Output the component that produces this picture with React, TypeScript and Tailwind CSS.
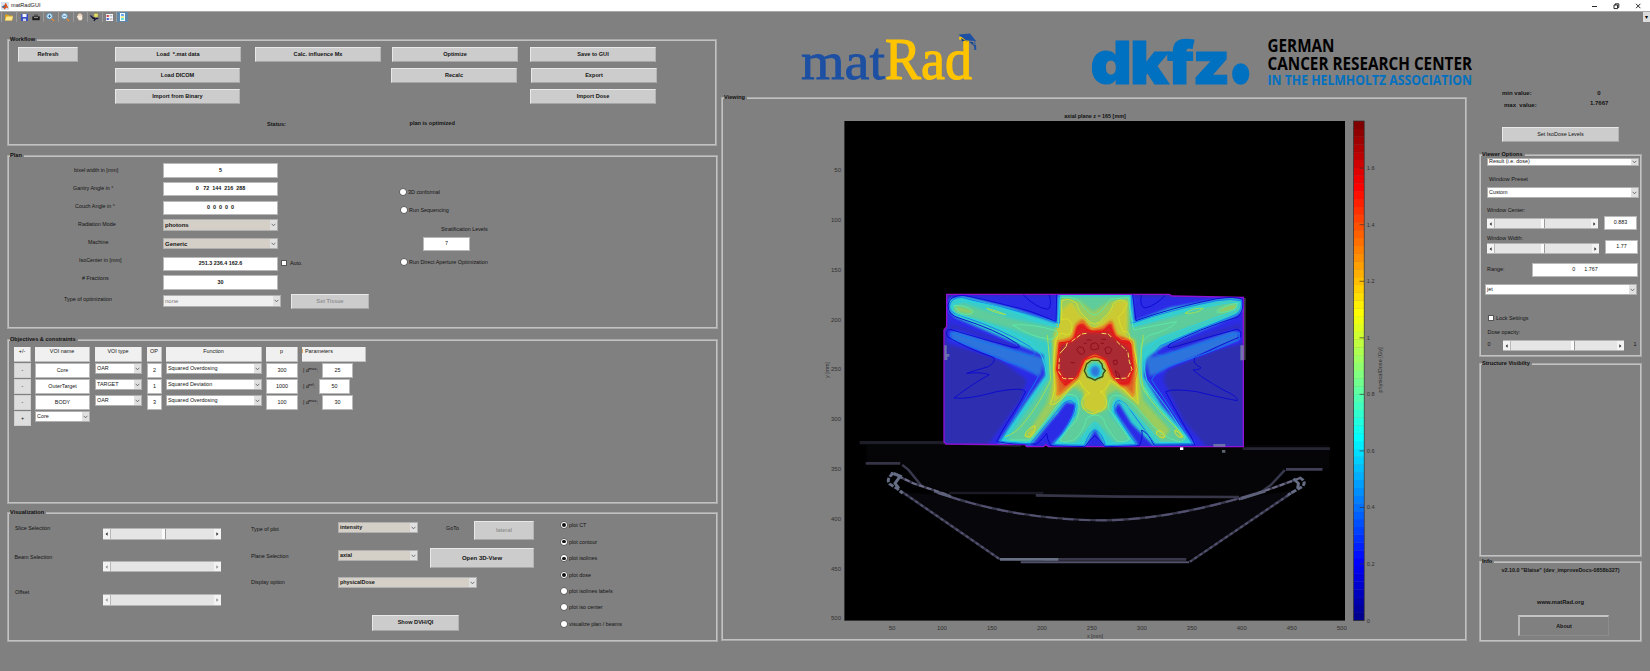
import React from "react";

type Kids = { className?: string; children?: React.ReactNode };

const Panel = ({ title, className = "", children }: Kids & { title: string }) => (
  <section className={`border-[1px] border-[#a9a9a9] shadow-[inset_0_0_0_1px_#c2c2c2] p-px ${className}`}>
    <h2 className="-mt-[6px] mb-[-2px] ml-px h-[8px] w-fit bg-[#808080] pr-[2px] text-[5.6px] font-bold leading-[8px] text-[#101010] whitespace-nowrap">
      {title}
    </h2>
    {children}
  </section>
);

const Label = ({ className = "", children }: Kids) => (
  <div className={`h-[8px] shrink-0 whitespace-pre leading-[8px] ${className}`}>{children}</div>
);

const Btn = ({ className = "", children }: Kids) => (
  <button
    className={`flex shrink-0 items-center justify-center whitespace-pre border border-b-[#a6a6a6] border-l-[#e8e8e8] border-r-[#b4b4b4] border-t-[#e8e8e8] bg-[#cccccc] leading-none ${className}`}
  >
    {children}
  </button>
);

const Edit = ({ className = "", children }: Kids) => (
  <div className={`flex shrink-0 items-center justify-center whitespace-pre border border-[#b9b9b9] bg-white leading-none ${className}`}>
    {children}
  </div>
);

const Popup = ({ className = "", children }: Kids) => (
  <div className={`flex shrink-0 items-center justify-between overflow-hidden border border-[#b0b0b0] pl-[1px] leading-none ${className}`}>
    <span className="whitespace-nowrap">{children}</span>
    <span className="flex h-full w-[7px] shrink-0 items-center justify-center bg-[#e0e0e0]">
      <svg width="5" height="4" viewBox="0 0 5 4">
        <path d="M0.6 0.8 L2.5 2.8 L4.4 0.8" fill="none" stroke="#555" strokeWidth="0.8" />
      </svg>
    </span>
  </div>
);

const Slider = ({ className = "", thumb, off }: { className?: string; thumb?: string; off?: boolean }) => (
  <div className={`flex shrink-0 border-y border-[#b4b4b4] bg-[#e5e5e5] ${className}`}>
    <span className="flex w-[8px] shrink-0 items-center justify-center border-r border-[#b9b9b9] bg-[#f3f3f3]">
      <svg width="3" height="4" viewBox="0 0 3 4">
        <path d="M2.6 0.3 L0.6 2 L2.6 3.7 Z" fill={off ? "#8a8a8a" : "#222"} />
      </svg>
    </span>
    <span className="flex grow">
      {thumb && <span className={`w-[4px] border-r border-[#9a9a9a] bg-[#fafafa] ${thumb}`} />}
    </span>
    <span className="flex w-[7px] shrink-0 items-center justify-center bg-[#f3f3f3]">
      <svg width="3" height="4" viewBox="0 0 3 4">
        <path d="M0.4 0.3 L2.4 2 L0.4 3.7 Z" fill={off ? "#8a8a8a" : "#222"} />
      </svg>
    </span>
  </div>
);

const Radio = ({ on, className = "", children }: Kids & { on?: boolean }) => (
  <div className={`flex h-[8px] shrink-0 items-center whitespace-nowrap leading-[8px] ${className}`}>
    <span className="mr-[2px] flex h-[6px] w-[6px] items-center justify-center rounded-full bg-white shadow-[0_0_0_0.5px_#444]">
      {on && <span className="h-[3.4px] w-[3.4px] rounded-full bg-[#111]" />}
    </span>
    {children}
  </div>
);

const Head = ({ className = "", children }: Kids) => (
  <div className={`h-[15px] shrink-0 border-b border-r border-[#c0c0c0] bg-[#f0f0f0] text-center leading-[8px] ${className}`}>{children}</div>
);

const Sign = ({ children }: Kids) => (
  <div className="mt-[1px] flex h-[15px] items-center justify-center border border-[#cfcfcf] bg-[#dedede] leading-none">{children}</div>
);

const Sep = ({ className = "" }: Kids) => <span className={`h-[10px] w-px bg-[#9a9a9a] ${className}`} />;

function Toolbar() {
  return (
    <div className="flex h-[11px] items-center border-t border-[#a8a8a8]">
      <Sep className="ml-px" />
      <svg className="ml-[3px]" width="8" height="8" viewBox="0 0 8 8">
        <path d="M0 1.5h3l1 1h3.5v5H0z" fill="#d9a321" />
        <path d="M1.5 3.6H8L6.8 7.5H0z" fill="#ffe88c" />
      </svg>
      <Sep className="ml-[3px]" />
      <svg className="ml-[4px]" width="7" height="7" viewBox="0 0 7 7">
        <path d="M0 0h7v7H0z" fill="#3b4fc4" />
        <path d="M1.5 0h4v3h-4z" fill="#f2f4ff" />
        <path d="M2 4.6h3V7H2z" fill="#c9d0ee" />
      </svg>
      <svg className="ml-[4px]" width="8" height="7" viewBox="0 0 8 7">
        <path d="M2 0.5h4v2H2z" fill="#555" />
        <path d="M0.3 2.4h7.4v3.8H0.3z" fill="#1c1c1c" />
        <path d="M2 3.2h4v0.9H2z" fill="#aaa" />
      </svg>
      <Sep className="ml-[3px]" />
      {[0, 1].map((i) => (
        <React.Fragment key={i}>
          <svg className="ml-[2px]" width="9" height="9" viewBox="0 0 9 9">
            <path d="M5 5 L8 8" stroke="#d98a3a" strokeWidth="1.5" />
            <circle cx="3.5" cy="3.2" r="2.7" fill="#e9f7ff" stroke="#5fa6d6" strokeWidth="0.9" />
            <path d={i ? "M2 3.2h3" : "M2 3.2h3M3.5 1.7v3"} stroke="#28609a" strokeWidth="0.9" />
          </svg>
          <Sep className="ml-[3px]" />
        </React.Fragment>
      ))}
      <svg className="ml-[2px]" width="8" height="8" viewBox="0 0 8 8">
        <path d="M0.6 3.4 L1.6 2.8 V1.2 h0.9 V0.4 h1 V0.2 h1 V0.6 h1 V1.4 h0.9 V3.6 L6.6 5.6 5.6 7.6H2.8z" fill="#fbeedd" stroke="#8b7b6a" strokeWidth="0.4" />
        <path d="M2.7 1.4 V3.2 M3.8 1 V3 M4.9 1.4 V3.2" stroke="#c59a72" strokeWidth="0.35" />
      </svg>
      <Sep className="ml-[3px]" />
      <svg className="ml-[2px]" width="9" height="9" viewBox="0 0 9 9">
        <path d="M4 0.5h4v3.6H4z" fill="#e8df6c" stroke="#8c8430" strokeWidth="0.4" />
        <path d="M0.4 2.5 L3.5 5.5 M4 8 Q5 5 8.4 5.5" stroke="#15154a" strokeWidth="1.2" fill="none" />
        <path d="M1.5 4.5h3.6v2.6z" fill="#111" />
      </svg>
      <Sep className="ml-[3px]" />
      <svg className="ml-[3px]" width="7" height="7" viewBox="0 0 7 7">
        <path d="M0 0h7v7H0z" fill="#f4f4fb" />
        <path d="M0.6 1h2.2v2H0.6z" fill="#d04848" />
        <path d="M0.6 4h2.2v2H0.6z" fill="#4b62cf" />
        <path d="M3.6 1.8h2.8M3.6 5h2.8" stroke="#777" strokeWidth="0.7" />
      </svg>
      <Sep className="ml-[3px]" />
      <span className="flex h-[10px] w-[11px] items-center justify-center bg-[#5f88a8]">
        <svg width="5" height="8" viewBox="0 0 5 8">
          <path d="M0 0h5v8H0z" fill="#f4f8ff" />
          <path d="M1 1h3v2H1z" fill="#6aa8f0" />
          <path d="M1 3h3v2H1z" fill="#e8f090" />
          <path d="M1 5h3v2H1z" fill="#6be0e0" />
        </svg>
      </span>
      <span className="ml-auto h-full w-[7px] bg-[#dcdcdc] text-center text-[6px] leading-[11px] text-black">▾</span>
    </div>
  );
}

function Logos() {
  return (
    <svg className="h-[75px] w-[760px] shrink-0" viewBox="721 22 760 75">
      <g fontFamily="'Liberation Serif', serif" fontSize="59">
        <text x="801" y="78.7" fill="#1d50a2" stroke="#1d50a2" strokeWidth="0.8" fontSize="52" textLength="84" lengthAdjust="spacingAndGlyphs">mat</text>
        <text x="885" y="78.7" fill="#ffc400" stroke="#ffc400" strokeWidth="1.2" textLength="87" lengthAdjust="spacingAndGlyphs">Rad</text>
      </g>
      <path d="M958.5 34.5 L970 33.5 L976 41 L966 40.5 Z" fill="#1d50a2" />
      <path d="M961 38 L967 41.5 L973 42 L974 46 Q967 39 962 41.5 Z" fill="#17458f" />
      <path d="M974.8 40 V47" stroke="#1d50a2" strokeWidth="0.8" />
      <path d="M974 45 h2 l0.3 5 h-2z" fill="#1d50a2" />
      <text x="1090.5" y="84.3" fontFamily="Inter, sans-serif" fontWeight="900" fontSize="59" fill="#0070c0" stroke="#0070c0" strokeWidth="1" letterSpacing="-1.6" textLength="138" lengthAdjust="spacingAndGlyphs">dkfz</text>
      <ellipse cx="1240.7" cy="74" rx="8.6" ry="10.8" fill="#0070c0" />
      <g fontFamily="'Open Sans', sans-serif" fontSize="17.2">
        <text x="1267.5" y="52" fontWeight="700" textLength="67" lengthAdjust="spacingAndGlyphs">GERMAN</text>
        <text x="1267.5" y="69.8" fontWeight="700" textLength="204.5" lengthAdjust="spacingAndGlyphs">CANCER RESEARCH CENTER</text>
        <text x="1267.5" y="84.7" fontSize="14.2" fontWeight="700" fill="#0070c0" textLength="204.5" lengthAdjust="spacingAndGlyphs">IN THE HELMHOLTZ ASSOCIATION</text>
      </g>
    </svg>
  );
}

const JET = [
  "#00008f", "#00009f", "#0000af", "#0000bf", "#0000cf", "#0000df", "#0000ef", "#0000ff",
  "#0010ff", "#0020ff", "#0030ff", "#0040ff", "#0050ff", "#0060ff", "#0070ff", "#0080ff",
  "#008fff", "#009fff", "#00afff", "#00bfff", "#00cfff", "#00dfff", "#00efff", "#00ffff",
  "#10ffef", "#20ffdf", "#30ffcf", "#40ffbf", "#50ffaf", "#60ff9f", "#70ff8f", "#80ff80",
  "#8fff70", "#9fff60", "#afff50", "#bfff40", "#cfff30", "#dfff20", "#efff10", "#ffff00",
  "#ffef00", "#ffdf00", "#ffcf00", "#ffbf00", "#ffaf00", "#ff9f00", "#ff8f00", "#ff8000",
  "#ff7000", "#ff6000", "#ff5000", "#ff4000", "#ff3000", "#ff2000", "#ff1000", "#ff0000",
  "#ef0000", "#df0000", "#cf0000", "#bf0000", "#af0000", "#9f0000", "#8f0000", "#800000",
];

const BODY = "M42 150 L50 140 L50 43 L718 43 L726 48 L940 52 L940 500 L355 500 L348 494 L340 500 L290 500 L285 494 L48 492 L42 486 Z";

const DOSE: [string, string][] = [
  ["#1e1e1e", "M120 45 L870 50 L940 90 L940 190 L720 240 L700 300 L760 420 L830 500 L170 500 L270 360 L290 300 L210 240 L50 190 L50 60 Z"],
  ["#121212", "M60 130 L270 200 L250 215 L60 165 Z M930 130 L715 200 L740 215 L930 170 Z"],
  ["#3c3c3c", "M58 154 L80 151 L300 222 L345 235 L330 290 L250 254 L65 179 Z M928 154 L905 151 L700 222 L645 235 L660 290 L740 254 L925 182 Z"],
  ["#646464", "M384 40 L606 40 L612 125 L720 84 L900 52 L938 58 L940 90 L915 109 L700 198 L646 238 L642 290 L694 375 L794 494 L672 497 L604 430 L565 366 L552 392 L624 496 L525 500 L495 446 L465 500 L364 496 L432 428 L440 372 L408 366 L304 494 L204 490 L286 370 L346 285 L340 225 L280 200 L75 111 L56 90 L58 56 L95 47 L240 83 L382 130 Z"],
  ["#747474", "M392 50 L598 50 L608 140 L640 135 L880 68 L928 64 L924 92 L690 172 L635 200 L625 270 L668 370 L768 475 L745 490 L690 487 L604 390 L560 350 L538 400 L603 478 L560 492 L520 448 L495 424 L465 455 L430 492 L383 487 L438 400 L448 352 L408 350 L382 400 L290 487 L230 482 L355 300 L365 190 L250 148 L75 100 L66 80 L100 70 L250 118 L385 145 Z"],
  ["#8c8c8c", "M390 55 L450 62 L490 95 L540 62 L598 56 L596 190 L625 275 L640 360 L720 450 L700 478 L610 370 L560 330 L530 345 L530 385 L495 405 L460 385 L460 340 L430 320 L385 365 L310 475 L285 472 L350 370 L372 280 L395 170 Z M75 78 L130 92 L125 102 L78 92 Z M918 70 L860 90 L875 98 L918 86 Z M735 440 L762 470 L745 470 Z"],
  ["#a0a0a0", "M395 90 L425 65 L455 110 L490 145 L530 110 L560 62 L590 62 L592 170 L615 180 L628 300 L625 368 L570 325 L540 310 L528 330 L530 385 L495 402 L458 385 L462 330 L445 310 L425 325 L370 372 L368 180 Z M288 466 L312 440 L305 466 Z M682 455 L698 455 L700 474 Z"],
  ["#c6c6c6", "M385 185 L430 170 L440 130 L460 115 L485 150 L520 140 L545 120 L560 165 L605 180 L618 270 L612 350 L575 310 L545 290 L520 235 L470 235 L440 300 L385 350 L376 270 Z"],
  ["#e4e4e4", "M386 188 L425 183 L438 136 L458 130 L480 153 L520 150 L542 126 L557 168 L602 183 L612 265 L600 312 L575 320 L545 290 L525 240 L495 225 L465 240 L445 290 L405 320 L378 270 Z"],
  ["#f8f8f8", "M391 198 L430 183 L462 158 L530 158 L560 182 L597 208 L607 265 L584 297 L555 295 L530 240 L495 222 L458 240 L440 293 L405 295 L384 265 Z"],
  ["#6a6a6a", "M495 240 L520 252 L524 275 L512 295 L495 300 L475 293 L466 272 L474 250 Z"],
  ["#3c3c3c", "M495 255 L510 265 L508 287 L495 292 L482 283 L481 265 Z"],
];

const ISO: [string, string][] = [
  ["#0a0ad0", "M380 44 L378 125 Q300 90 240 78 Q150 55 100 46 Q58 46 54 75 Q52 105 90 115 Q200 150 260 190 Q280 205 250 202 Q150 175 60 148 Q45 152 52 170 Q110 205 190 232 Q200 245 175 260 Q140 270 110 280 Q150 275 178 284 Q130 310 72 354 Q110 360 200 335 Q280 320 287 335 Q270 370 230 430 Q215 455 200 485 L250 492 L320 492 Q340 475 350 460 Q352 480 362 497 L465 500 Q480 478 495 467 Q508 478 525 500 L628 497 Q640 470 635 450 Q655 460 672 495 L795 495 Q785 470 765 440 Q730 380 707 335 Q730 325 800 335 Q880 355 922 362 Q925 350 880 330 Q810 290 790 270 Q815 268 812 262 Q785 250 795 232 Q870 195 932 170 Q936 150 920 148 Q820 175 725 203 Q705 205 720 192 Q800 150 925 110 Q942 90 938 58 Q915 48 860 56 Q720 85 618 122 L608 44"],
  ["#0a0ad0", "M280 45 Q320 85 355 88 Q366 75 358 45 M634 45 Q628 80 645 84 Q675 78 705 47"],
  ["#1478f0", "M388 46 L388 130 Q330 110 240 88 Q160 70 95 52 Q62 52 58 80 Q60 100 100 110 Q220 150 300 200 Q330 225 300 228 Q200 200 65 158 Q55 170 70 176 Q160 215 230 245 Q300 260 325 290 Q290 350 210 484 L300 492 L400 370 Q430 350 435 380 Q425 430 368 494 L463 496 Q480 450 495 450 Q515 455 527 497 L620 494 Q570 430 552 380 Q560 345 590 375 L675 492 L787 491 Q740 410 665 300 Q680 265 740 250 Q850 215 928 178 L928 158 Q800 195 700 228 Q660 230 690 198 Q800 150 918 104 Q938 90 934 62 Q900 55 860 62 Q720 90 604 130 L604 46"],
  ["#28d4e4", "M390 52 L385 142 Q320 125 250 95 Q180 70 100 62 Q60 70 68 90 Q75 100 80 102 Q200 135 300 185 Q345 220 350 290 Q290 370 220 482 L295 487 L400 362 Q420 340 440 365 Q440 420 378 488 L455 490 Q475 430 495 428 Q510 430 530 490 L610 488 L550 400 Q540 365 565 355 Q620 400 690 488 L778 485 Q720 390 650 300 Q640 270 645 240 Q640 205 690 175 Q780 140 905 96 Q930 85 925 66 Q860 70 740 98 Q660 125 608 140 L600 52"],
  ["#5fe8a8", "M395 52 Q450 48 460 80 Q480 105 495 105 Q515 100 540 58 L596 52 Q602 120 612 150 Q680 135 740 125 Q720 150 660 165 Q628 180 632 220 Q625 270 632 310 Q645 335 655 345 Q640 315 640 320 Q680 380 765 470 Q765 485 745 485 Q690 470 640 405 Q590 345 555 345 Q535 350 535 385 Q560 420 598 478 Q580 490 560 482 Q525 440 520 415 Q495 395 470 415 Q460 460 430 480 Q400 492 390 480 Q410 450 440 420 Q455 380 440 350 Q410 330 390 365 Q350 420 300 480 L240 480 M248 135 Q300 130 380 152 Q390 170 360 178 Q300 170 248 135 M72 76 Q110 75 130 95 Q120 108 90 100 Z M922 70 Q880 75 860 96 Q880 100 915 88 Z"],
  ["#a6e050", "M225 470 Q260 460 285 425 Q330 370 362 300 Q360 240 352 165 M640 165 Q625 260 640 330 Q690 400 735 440 L760 470 M170 85 Q200 92 228 104 Q190 98 170 85 M765 100 Q790 82 820 85 Q800 102 765 100"],
  ["#dce028", "M395 62 Q420 52 440 70 Q445 95 465 110 Q495 155 525 110 Q545 95 550 70 Q575 50 592 70 Q585 95 565 110 Q570 140 580 155 Q600 150 600 180 Q622 220 620 260 Q615 300 625 372 Q600 350 580 328 Q560 310 540 300 Q530 335 510 335 Q530 345 530 370 Q525 395 500 395 Q495 405 480 400 Q455 390 455 365 Q465 340 480 340 Q455 325 448 300 Q420 320 400 350 Q375 380 360 372 Q380 330 372 290 Q368 230 378 180 Q385 150 410 165 Q430 160 425 130 Q415 110 395 120 Z M285 468 Q290 445 315 437 Q318 450 300 472 Z M680 455 Q695 445 705 470 Q695 480 680 462 Z M735 450 Q750 455 758 472 Q745 475 735 460 Z"],
  ["#f08020", "M383 182 Q430 180 432 150 Q442 125 462 128 Q480 150 510 145 Q535 125 548 130 Q555 165 575 178 Q608 175 608 195 Q612 230 622 270 Q612 310 608 350 Q585 320 560 305 Q545 285 535 265 Q525 235 495 225 Q465 232 455 265 Q440 300 405 325 Q390 340 380 345 Q390 310 376 270 Q388 230 383 182"],
  ["#e41414", "M388 188 Q425 190 436 170 Q440 140 458 140 Q480 158 518 155 Q535 135 543 145 Q552 175 575 188 L602 190 L608 268 L596 308 L570 312 L548 290 L528 240 L495 228 L463 240 L442 290 L405 315 L392 300 L380 268 Z"],
  ["#8c0c1c", "M440 208 l8 -8 l12 4 l4 12 l-8 8 l-10 -6 z M484 192 l12 -4 l8 6 l2 12 l-16 4 l-8 -4 z M524 206 l12 -6 l10 8 l-6 12 l-10 2 z M556 272 l10 8 l4 14 l-10 -6 z M550 242 l10 -2 l2 12 l-10 2 z M512 190 h10 M462 190 h8 M422 248 h12 M470 180 h14 M514 178 h14"],
];

function DoseView() {
  return (
    <svg className="h-[541px] w-[742px]" viewBox="723 99 742 541" fontFamily="'Liberation Sans', Arial, sans-serif">
      <defs>
        <filter id="jet" x="0" y="0" width="1" height="1" colorInterpolationFilters="sRGB">
          <feGaussianBlur stdDeviation="5.5" />
          <feComponentTransfer>
            <feFuncR type="table" tableValues=".19 .17 .18 .18 .48 .8 .86 .9 .6" />
            <feFuncG type="table" tableValues=".19 .17 .5 .8 .8 .8 .48 .12 .18" />
            <feFuncB type="table" tableValues=".56 .92 .86 .84 .48 .2 .15 .12 .22" />
          </feComponentTransfer>
        </filter>
        <clipPath id="body"><path d={BODY} /></clipPath>
      </defs>
      <text x="1095" y="118.4" fontSize="5.4" fontWeight="700" textAnchor="middle" fill="#111">axial plane z = 165 [mm]</text>
      <rect x="845" y="121" width="500" height="499.5" fill="#000" />
      <path d="M844.5 121 V620.5 H1345" fill="none" stroke="#333" />

      <g transform="translate(810 420) scale(.37628 .33333)" fill="none">
        <path d="M150 75 H1380 V148 H1265 L1225 200 L1140 236 L380 220 L295 195 L240 130 H150 Z" fill="#050508" />
        <path d="M235 215 L500 418 H1010 L1290 210 L1140 236 Q760 370 380 228 Z" fill="#06060b" />
        <path d="M132 68 H340 L560 76" stroke="#1e1e28" strokeWidth="10" />
        <path d="M1150 86 H1382" stroke="#262632" strokeWidth="8" />
        <path d="M148 130 H240" stroke="#343446" strokeWidth="8" />
        <path d="M1265 148 H1362" stroke="#3f3f58" strokeWidth="8" />
        <path d="M370 219 H620" stroke="#1a1a24" strokeWidth="8" />
        <path d="M600 226 L820 230 L1140 231" stroke="#363648" strokeWidth="8" />
        <g stroke="#38384c" strokeWidth="7">
          <path d="M245 135 L262 150 L298 200" />
          <path d="M1262 150 L1225 195 L1200 215" />
          <path d="M330 214 Q540 300 780 301 Q960 300 1210 212" />
          <path d="M240 212 L505 418" />
          <path d="M1285 215 L1010 425" />
          <path d="M215 158 L275 190 L370 226" />
          <path d="M1300 175 L1235 202 L1140 238" />
        </g>
        <g stroke="#525270" strokeWidth="6">
          <path d="M330 214 Q540 300 780 301 Q960 300 1210 212" strokeDasharray="30 14" />
          <path d="M240 212 L505 418" strokeDasharray="8 9" />
          <path d="M1285 215 L1010 425" strokeDasharray="8 9" />
          <path d="M215 158 L275 190 L370 226" strokeDasharray="14 7" stroke="#6c6c88" />
          <path d="M1300 175 L1235 202 L1140 238" strokeDasharray="14 7" stroke="#6c6c88" />
        </g>
        <g stroke="#666e86" strokeWidth="8">
          <path d="M222 160 Q200 178 212 192 L232 206 L246 220" strokeDasharray="14 4" />
          <path d="M222 160 L240 168 L226 190 L236 205" />
          <path d="M1300 172 Q1322 185 1308 200 L1270 225" strokeDasharray="14 4" />
          <path d="M1285 176 L1298 190 L1296 206" />
          <path d="M340 218 L375 230 M1145 236 L1210 214" stroke="#5c6078" />
        </g>
        <path d="M620 418 H1000" stroke="#38384a" strokeWidth="8" />
        <path d="M560 427 H1008" stroke="#51516c" strokeWidth="6" />
        <path d="M505 418 H660" stroke="#687084" strokeWidth="8" />
      </g>

      <g transform="translate(930 280) scale(.33333)">
        <path d="M940 54 h7 V240 h-7 z" fill="#3c3c44" />
        <g clipPath="url(#body)">
          <g filter="url(#jet)">
            <rect x="-20" y="0" width="1040" height="540" fill="#0c0c0c" />
            {DOSE.map(([fill, d], i) => <path key={i} d={d} fill={fill} />)}
          </g>
        </g>
        <path d={BODY} fill="none" stroke="#9410d6" strokeWidth="4" />
        <g fill="none" strokeWidth="2.8" strokeLinejoin="round">
          {ISO.map(([stroke, d], i) => <path key={i} d={d} stroke={stroke} />)}
        </g>
        <g fill="none" stroke="#f3dc5c" strokeWidth="3">
          <path d="M390 220 L408 200 L412 188" />
          <path d="M425 184 L455 162 L470 160" strokeDasharray="14 5" />
          <path d="M515 160 L535 162 L545 172 M560 184 L590 212" strokeDasharray="14 5" />
          <path d="M594 218 L598 245 L606 268 L592 294 L555 296 M430 296 H400 L386 275 L388 235" strokeDasharray="15 6" />
        </g>
        <path d="M484 241 L506 241 L516 252 L518 264 L526 272 L520 280 L518 290 L502 296 L495 301 L486 296 L472 291 L463 272 L470 252 Z" fill="none" stroke="#3d4a10" strokeWidth="4" />
        <path d="M43 196 h7 v26 h8 v8 h-6 v10 h-9 z M931 196 h10 v45 h-10 z M850 492 h36 v8 h-36z M876 510 h10 v8 h-10z" fill="#8c98a8" fillOpacity=".65" />
        <path d="M750 502 h10 v8 h-10z" fill="#fff" />
      </g>

      <g fontSize="6" fill="#303030">
        {[50, 100, 150, 200, 250, 300, 350, 400, 450, 500].map((v) => (
          <React.Fragment key={v}>
            <text x={842 + v * 0.9995} y="630.3" textAnchor="middle">{v}</text>
            <text x="841" y={122.2 + v * 0.9965} textAnchor="end">{v}</text>
          </React.Fragment>
        ))}
        <text x="1095" y="638" fontSize="5.4" textAnchor="middle">x [mm]</text>
        <text transform="translate(828.5 370) rotate(-90)" fontSize="5.4" textAnchor="middle">y [mm]</text>
      </g>

      {JET.map((c, i) => (
        <rect key={c} x="1353.5" y={620.5 - (i + 1) * 7.805} width="10.7" height="8" fill={c} />
      ))}
      <rect x="1353.5" y="121" width="10.7" height="499.5" fill="none" stroke="#333" strokeWidth="0.7" />
      <g fontSize="5.6" fill="#303030">
        {["0", "0.2", "0.4", "0.6", "0.8", "1", "1.2", "1.4", "1.6"].map((t) => {
          const y = 620.5 - Number(t) * 282.7;
          return (
            <React.Fragment key={t}>
              <path d={`M1359.5 ${y} h4.5`} stroke="#333" strokeWidth="0.7" />
              <text x="1366.8" y={y + 2}>{t}</text>
            </React.Fragment>
          );
        })}
        <text transform="translate(1381.5 370) rotate(-90)" textAnchor="middle">physicalDose [Gy]</text>
      </g>
    </svg>
  );
}

const rows = [
  { name: "Core", type: "OAR", op: "2", fn: "Squared Overdosing", p: "300", sup: "max", v: "25", ml: "ml-[20px]" },
  { name: "OuterTarget", type: "TARGET", op: "1", fn: "Squared Deviation", p: "1000", sup: "ref", v: "50", ml: "ml-[17px]" },
  { name: "BODY", type: "OAR", op: "3", fn: "Squared Overdosing", p: "100", sup: "max", v: "30", ml: "ml-[20px]" },
];

function Workflow() {
  return (
    <Panel title="Workflow" className="mt-[17px] h-[107px] w-[710px]">
      <div className="flex items-start pt-[6px] text-[5.6px] font-bold">
        <Btn className="ml-[9px] h-[15px] w-[60px]">Refresh</Btn>
        <div className="ml-[37px] flex flex-col gap-[6px]">
          <Btn className="h-[15px] w-[126px]">Load  *.mat data</Btn>
          <Btn className="h-[15px] w-[125px]">Load DICOM</Btn>
          <Btn className="h-[15px] w-[125px]">Import from Binary</Btn>
        </div>
        <div className="ml-[14px] w-[126px]">
          <Btn className="h-[15px] w-[126px]">Calc. influence Mx</Btn>
          <Label className="ml-[12px] mt-[58px]">Status:</Label>
        </div>
        <div className="ml-[10px] w-[127px]">
          <Btn className="ml-px h-[15px] w-[126px]">Optimize</Btn>
          <Btn className="mt-[6px] h-[15px] w-[126px]">Recalc</Btn>
          <Label className="ml-[18.5px] mt-[36px]">plan is optimized</Label>
        </div>
        <div className="ml-[12px] flex flex-col gap-[6px]">
          <Btn className="h-[15px] w-[126px]">Save to GUI</Btn>
          <Btn className="ml-px h-[15px] w-[126px]">Export</Btn>
          <Btn className="h-[15px] w-[126px]">Import Dose</Btn>
        </div>
      </div>
    </Panel>
  );
}

function Plan() {
  return (
    <Panel title="Plan" className="mt-[9px] h-[174px]">
      <div className="flex items-start text-[5.4px]">
        <div className="w-[154px] pt-[9px]">
          <Label className="ml-[65px]">bixel width in [mm]</Label>
          <Label className="ml-[64px] mt-[10px]">Gantry Angle in °</Label>
          <Label className="ml-[66px] mt-[10px]">Couch Angle in °</Label>
          <Label className="ml-[69px] mt-[10px]">Radiation Mode</Label>
          <Label className="ml-[79px] mt-[10px]">Machine</Label>
          <Label className="ml-[70px] mt-[10px]">IsoCenter in [mm]</Label>
          <Label className="ml-[73px] mt-[10px]"># Fractions</Label>
          <Label className="ml-[55px] mt-[13px]">Type of optimization</Label>
        </div>
        <div className="w-[118px] pt-[6px] font-bold">
          <Edit className="h-[15px] w-[115px]">5</Edit>
          <Edit className="mt-[4px] h-[14px] w-[115px]">0   72  144  216  288</Edit>
          <Edit className="mt-[5px] h-[14px] w-[115px]">0  0  0  0  0</Edit>
          <Popup className="mt-[4px] h-[12px] w-[115px] bg-[#d4d0c8] text-[6px]">photons</Popup>
          <Popup className="mt-[7px] h-[11px] w-[115px] bg-[#d4d0c8] text-[6px]">Generic</Popup>
          <Edit className="mt-[8px] h-[14px] w-[115px]">251.3 236.4 162.6</Edit>
          <Edit className="mt-[4px] h-[15px] w-[115px]">30</Edit>
          <Popup className="mt-[5px] h-[12px] w-[118px] bg-[#f0f0f0] text-[6px] font-normal text-[#777]">none</Popup>
        </div>
        <div className="w-[119px] pt-[102px]">
          <div className="flex h-[8px] items-center leading-[8px]">
            <span className="mr-[3px] h-[6px] w-[6px] border-[0.5px] border-[#555] bg-white" />
            Auto.
          </div>
          <Btn className="ml-[10px] mt-[27px] h-[15px] w-[78px] font-bold text-[#929292]">Set Tissue</Btn>
        </div>
        <div className="pt-[31px]">
          <Radio>3D conformal</Radio>
          <Radio className="ml-px mt-[9.5px]">Run Sequencing</Radio>
          <Label className="ml-[41px] mt-[11px]">Stratification Levels</Label>
          <Edit className="ml-[23px] mt-[4.5px] h-[14px] w-[47px]">7</Edit>
          <Radio className="ml-px mt-[6.5px]">Run Direct Aperture Optimization</Radio>
        </div>
      </div>
    </Panel>
  );
}

function Objectives() {
  return (
    <Panel title="Objectives & constraints" className="mt-[10px] h-[165px]">
      <div className="flex items-start pt-[6px] text-[5.4px]">
        <div className="ml-[5px] w-[17px]">
          <Head>+/-</Head>
          <Sign>-</Sign>
          <Sign>-</Sign>
          <Sign>-</Sign>
          <Sign>+</Sign>
        </div>
        <div className="ml-[4px] w-[55px]">
          <Head>VOI name</Head>
          {rows.map((r) => <Edit key={r.name} className="mt-[1px] h-[15px]">{r.name}</Edit>)}
          <Popup className="mt-[1px] h-[11px] bg-white">Core</Popup>
        </div>
        <div className="ml-[5px] w-[47px]">
          <Head>VOI type</Head>
          {rows.map((r) => <div key={r.name} className="h-[16px] pt-px"><Popup className="h-[11px] bg-white">{r.type}</Popup></div>)}
        </div>
        <div className="ml-[5px] w-[15px]">
          <Head>OP</Head>
          {rows.map((r) => <Edit key={r.name} className="mt-[1px] h-[15px]">{r.op}</Edit>)}
        </div>
        <div className="ml-[4px] w-[96px]">
          <Head>Function</Head>
          {rows.map((r) => <div key={r.name} className="h-[16px] pt-px"><Popup className="h-[11px] bg-white">{r.fn}</Popup></div>)}
        </div>
        <div className="ml-[4px] w-[32px]">
          <Head>p</Head>
          {rows.map((r) => <Edit key={r.name} className="mt-[1px] h-[15px]">{r.p}</Edit>)}
        </div>
        <div className="ml-[4px]">
          <Head className="flex w-[64px]">
            <span className="mr-[2px] mt-[2px] h-[4px] w-px bg-[#e8a860]" />
            Parameters
          </Head>
          {rows.map((r) => (
            <div key={r.name} className="mt-[1px] flex h-[15px] items-center">
              <span className="w-0 whitespace-nowrap leading-none"><span className="ml-px">| <i>d</i><sup className="text-[4px]">{r.sup}</sup>:</span></span>
              <Edit className={`h-[15px] w-[31px] ${r.ml}`}>{r.v}</Edit>
            </div>
          ))}
        </div>
      </div>
    </Panel>
  );
}

function Visualization() {
  return (
    <Panel title="Visualization" className="mt-[8px] h-[130px]">
      <div className="flex items-start text-[5.4px]">
        <div className="w-[94px] pt-[10px]">
          <Label className="ml-[6px]">Slice Selection</Label>
          <Label className="ml-[5.5px] mt-[21px]">Beam Selection</Label>
          <Label className="ml-[6px] mt-[27px]">Offset</Label>
        </div>
        <div className="w-[148px] pt-[14px]">
          <Slider className="h-[12px] w-[118px]" thumb="ml-[51px]" />
          <Slider className="mt-[21px] h-[11px] w-[118px]" off />
          <Slider className="mt-[22px] h-[12px] w-[118px]" off />
        </div>
        <div className="w-[87px] pt-[11px]">
          <Label>Type of plot</Label>
          <Label className="mt-[18.5px]">Plane Selection</Label>
          <Label className="mt-[18.5px]">Display option</Label>
        </div>
        <div className="w-[196px] pt-[7px] font-bold">
          <div className="flex h-[19px] items-start">
            <Popup className="mt-[1px] h-[11px] w-[80px] bg-[#d4d0c8]">intensity</Popup>
            <Label className="ml-[28px] mt-[3px] w-[28px] font-normal">GoTo</Label>
            <Btn className="h-[19px] w-[60px] text-[#929292]">lateral</Btn>
          </div>
          <div className="mt-[8px] flex h-[20px] items-start">
            <Popup className="mt-[2px] h-[11px] w-[80px] bg-[#d4d0c8]">axial</Popup>
            <Btn className="ml-[12px] h-[20px] w-[104px] text-[6px]">Open 3D-View</Btn>
          </div>
          <Popup className="mt-[9px] h-[11px] w-[139px] bg-[#d4d0c8]">physicalDose</Popup>
          <Btn className="ml-[34px] mt-[27px] h-[16px] w-[87px] text-[5.6px]">Show DVH/QI</Btn>
        </div>
        <div className="ml-[27px] pt-[7px]">
          <Radio on>plot CT</Radio>
          <Radio on className="mt-[8.7px]">plot contour</Radio>
          <Radio on className="mt-[8.7px]">plot isolines</Radio>
          <Radio on className="mt-[8.7px]">plot dose</Radio>
          <Radio className="mt-[7.5px]">plot isolines labels</Radio>
          <Radio className="mt-[8.8px]">plot iso center</Radio>
          <Radio className="mt-[8.5px]">visualize plan / beams</Radio>
        </div>
      </div>
    </Panel>
  );
}

function Sidebar() {
  return (
    <div className="ml-[12px] w-[163px] text-[5.4px]">
      <div className="flex h-[38px] text-[6px] font-bold">
        <div className="w-[111px] pl-[23px]">
          <Label>min value:</Label>
          <Label className="ml-[2px] mt-[3.5px]">max  value:</Label>
        </div>
        <div className="w-[18px] text-center">
          <Label>0</Label>
          <Label className="mt-[2px]">1.7667</Label>
        </div>
      </div>
      <Btn className="ml-[23px] h-[15px] w-[117px]">Set IsoDose Levels</Btn>
      <Panel title="Viewer Options" className="mt-[12px] h-[203px]">
        <Popup className="ml-[6px] mt-[2px] h-[8px] w-[152px] bg-white">Result (i.e. dose)</Popup>
        <Label className="ml-[8px] mt-[9px] text-[5.8px]">Window Preset</Label>
        <Popup className="ml-[6px] mt-[4px] h-[11px] w-[152px] bg-white">Custom</Popup>
        <div className="mt-[8px] flex">
          <div className="w-[117px] pl-[6px]">
            <Label>Window Center:</Label>
            <Slider className="mt-[4px] h-[11px] w-[111px]" thumb="ml-[46px]" />
            <Label className="mt-[5px]">Window Width:</Label>
            <Slider className="mt-px h-[11px] w-[112px]" thumb="ml-[46px]" />
          </div>
          <div className="pl-[6px] pt-[10px]">
            <Edit className="h-[14px] w-[33px]">0.883</Edit>
            <Edit className="ml-px mt-[10px] h-[14px] w-[33px]">1.77</Edit>
          </div>
        </div>
        <div className="mt-[9px] flex items-start">
          <Label className="ml-[6px] mt-[2px] w-[45px]">Range:</Label>
          <Edit className="h-[14px] w-[106px]">0      1.767</Edit>
        </div>
        <Popup className="ml-[4px] mt-[7px] h-[11px] w-[152px] bg-white">jet</Popup>
        <div className="ml-[7px] mt-[19px] flex h-[8px] items-center leading-[8px]">
          <span className="mr-[2px] h-[6px] w-[6px] border-[0.5px] border-[#555] bg-white" />
          Lock Settings
        </div>
        <Label className="ml-[6.5px] mt-[5.5px]">Dose opacity:</Label>
        <div className="mt-[4.5px] flex items-start">
          <Label className="ml-[6.5px] w-[15px]">0</Label>
          <Slider className="h-[11px] w-[121px]" thumb="ml-[60px]" />
          <Label className="ml-[10px]">1</Label>
        </div>
      </Panel>
      <Panel title="Structure Visibilty" className="mt-[6px] h-[194px]" />
      <Panel title="Info" className="mt-[4px] h-[81px]">
        <Label className="mt-[3px] text-center font-bold">v2.10.0 "Blaise" (dev_improveDocs-0858b327)</Label>
        <Label className="mt-[24px] text-center text-[5.8px] font-bold">www.matRad.org</Label>
        <button className="ml-[37px] mt-[9px] flex h-[21px] w-[91px] items-center justify-center border-l-2 border-t-2 border-b border-r border-b-[#8c8c8c] border-l-[#b8b8b8] border-r-[#8c8c8c] border-t-[#c4c4c4] bg-[#808080] font-bold">
          About
        </button>
      </Panel>
    </div>
  );
}

export default function App() {
  return (
    <div className="h-[671px] w-[1650px] overflow-hidden bg-[#808080] font-['Liberation_Sans',Arial,sans-serif] text-[#141414]">
      <header className="flex h-[11px] items-center bg-white">
        <svg className="ml-px" width="8" height="8" viewBox="0 0 8 8">
          <path d="M0 0h8v8H0z" fill="#d9e6f2" />
          <path d="M0.5 5 L3 3.5 L4.8 0.8 L7.5 6.5 L5.5 5.5 L3.5 7.5 L2.4 5.8z" fill="#d9531e" />
          <path d="M0.5 5 L3 3.5 L4 4.6 L2.4 5.8z" fill="#2b6cb0" />
        </svg>
        <span className="ml-[2px] text-[5.6px] leading-none">matRadGUI</span>
        <div className="ml-auto flex items-center">
          <svg width="56" height="8" viewBox="0 0 56 8" fill="none" stroke="#111" strokeWidth="0.9">
            <path d="M2 4.5h5" />
            <path d="M24 3h3.6v3.6H24z M25.2 3V1.8h3.6v3.6h-1.2" />
            <path d="M46 1.8l4.4 4.4M50.4 1.8l-4.4 4.4" />
          </svg>
        </div>
        <span className="w-[4px]" />
      </header>
      <Toolbar />
      <div className="flex items-start">
        <div className="ml-[7px] w-[711px]">
          <Workflow />
          <Plan />
          <Objectives />
          <Visualization />
        </div>
        <div className="ml-[3px]">
          <Logos />
          <div className="flex items-start">
            <Panel title="Viewing" className="h-[544px] w-[746px]">
              <DoseView />
            </Panel>
            <div className="-mt-[8px]">
              <Sidebar />
            </div>
          </div>
        </div>
      </div>
    </div>
  );
}
